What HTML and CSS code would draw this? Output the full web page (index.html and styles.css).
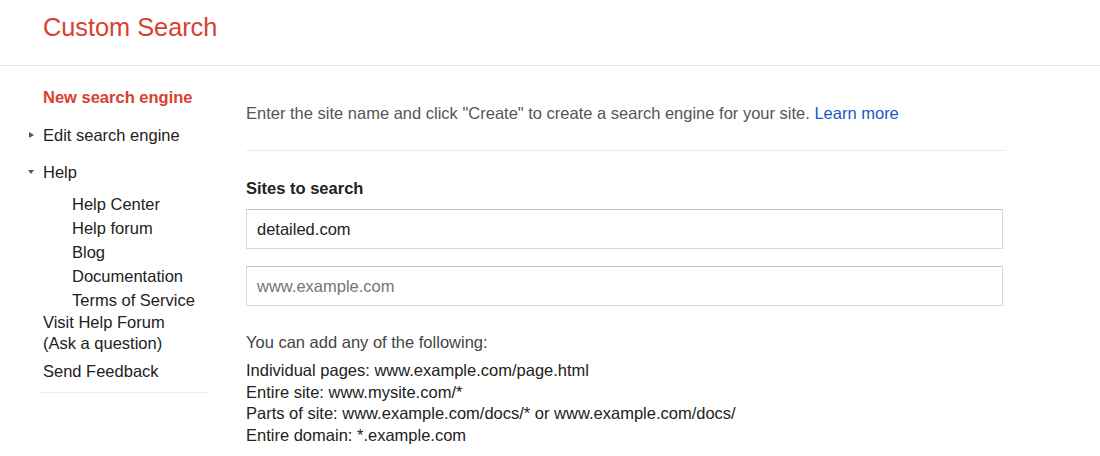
FILE: index.html
```html
<!DOCTYPE html>
<html lang="en">
<head>
<meta charset="utf-8">
<title>Custom Search</title>
<link rel="stylesheet" href="styles.css">
</head>
<body>
<header class="topbar">
  <h1 class="brand">Custom Search</h1>
</header>
<div class="layout">
  <nav class="sidebar">
    <div class="nav-item nav-active"><span class="toggle"></span>New search engine</div>
    <div class="nav-item nav-edit"><span class="toggle"><span class="tri-right"></span></span>Edit search engine</div>
    <div class="nav-item nav-help"><span class="toggle"><span class="tri-down"></span></span>Help</div>
    <ul class="sublist">
      <li>Help Center</li>
      <li>Help forum</li>
      <li>Blog</li>
      <li>Documentation</li>
      <li>Terms of Service</li>
    </ul>
    <div class="extra">
      <div class="visit">Visit Help Forum<br>(Ask a question)</div>
      <div class="feedback">Send Feedback</div>
    </div>
  </nav>
  <main class="content">
    <p class="intro">Enter the site name and click "Create" to create a search engine for your site. <a class="link" href="#">Learn more</a></p>
    <h2 class="section-title">Sites to search</h2>
    <div class="field filled">detailed.com</div>
    <div class="field placeholder">www.example.com</div>
    <p class="hint">You can add any of the following:</p>
    <ul class="examples">
      <li>Individual pages: www.example.com/page.html</li>
      <li>Entire site: www.mysite.com/*</li>
      <li>Parts of site: www.example.com/docs/* or www.example.com/docs/</li>
      <li>Entire domain: *.example.com</li>
    </ul>
  </main>
</div>
</body>
</html>
```

FILE: styles.css
```css
* { box-sizing: border-box; }
html, body { margin: 0; padding: 0; background: #fff; }
body {
  font-family: "Liberation Sans", Arial, sans-serif;
  font-size: 16.5px;
  color: #222;
}
.topbar {
  height: 66px;
  border-bottom: 1px solid #e5e5e5;
  padding: 13px 0 0 43px;
}
.brand {
  margin: 0;
  font-size: 25.3px;
  font-weight: normal;
  line-height: 28.75px;
  color: #d9402f;
}
.layout {
  display: flex;
}
.sidebar {
  width: 246px;
  flex: none;
  padding: 19px 0 0 28px;
}
.nav-item {
  display: flex;
  align-items: center;
  line-height: 24px;
  color: #222;
}
.toggle {
  width: 15px;
  flex: none;
  display: flex;
  align-items: center;
  height: 24px;
}
.tri-right {
  width: 0; height: 0;
  margin-left: 1px;
  border-top: 3.5px solid transparent;
  border-bottom: 3.5px solid transparent;
  border-left: 5px solid #555;
}
.tri-down {
  width: 0; height: 0;
  margin-top: -1px;
  border-left: 3.5px solid transparent;
  border-right: 3.5px solid transparent;
  border-top: 4px solid #555;
}
.nav-active {
  color: #d9402f;
  font-weight: bold;
}
.nav-edit { margin-top: 14px; }
.nav-help { margin-top: 13px; }
.sublist {
  list-style: none;
  margin: 8px 0 0 44px;
  padding: 0;
}
.sublist li { line-height: 24px; }
.extra {
  width: 167px;
  margin-left: 12px;
  padding: 0 0 9px 3px;
  border-bottom: 1px solid #ececec;
}
.visit {
  line-height: 21px;
}
.feedback {
  margin-top: 5px;
  line-height: 24px;
}
.content {
  width: 760px;
  padding-top: 35px;
}
.intro {
  margin: 0;
  line-height: 24px;
  color: #555;
  padding-bottom: 25px;
  border-bottom: 1px solid #ebebeb;
}
.link {
  color: #1a56c9;
  text-decoration: none;
}
.section-title {
  margin: 25px 0 0;
  font-size: 16.5px;
  font-weight: bold;
  line-height: 24px;
  color: #222;
}
.field {
  width: 757px;
  height: 40px;
  border: 1px solid #d9d9d9;
  border-top-color: #c4c4c4;
  padding: 0 10px;
  display: flex;
  align-items: center;
  background: #fff;
}
.filled {
  margin-top: 9px;
  color: #222;
}
.placeholder {
  margin-top: 17px;
  color: #757575;
}
.hint {
  margin: 24px 0 0;
  line-height: 24px;
  color: #444;
}
.examples {
  list-style: none;
  margin: 6px 0 0;
  padding: 0;
}
.examples li {
  line-height: 21.6px;
  color: #222;
}
```
